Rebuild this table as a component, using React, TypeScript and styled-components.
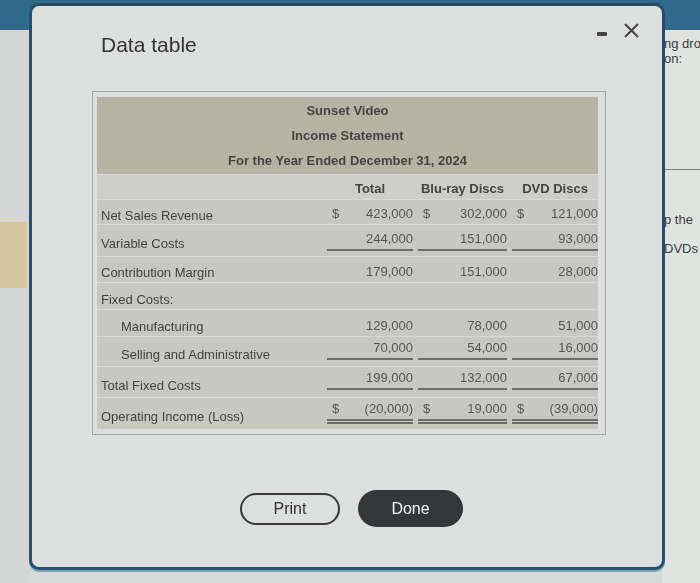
import React from "react";
import styled, { createGlobalStyle } from "styled-components";

const Global = createGlobalStyle`
  html, body { margin: 0; padding: 0; }
  body {
    width: 700px;
    height: 583px;
    overflow: hidden;
    background: #d6d9d8;
    font-family: "Liberation Sans", Arial, sans-serif;
  }
`;

const Page = styled.div`
  width: 700px;
  height: 583px;
  display: flex;
  flex-direction: column;
`;

const TopBand = styled.div`
  height: 30px;
  background: #2f6a8c;
  flex: none;
`;

const Main = styled.div`
  flex: 1;
  display: flex;
`;

const LeftGutter = styled.div`
  width: 29px;
  background: #d4d7d6;
  padding-top: 192px;
  box-sizing: border-box;
`;

const YellowBand = styled.div`
  width: 27px;
  height: 66px;
  background: #d5c89f;
`;

const Behind = styled.div`
  flex: 1;
`;

const RightPanel = styled.div`
  width: 38px;
  background: #e1e3e1;
  padding-top: 6px;
  box-sizing: border-box;
  color: #3a3a3a;
  font-size: 13px;
  line-height: 15px;
  overflow: hidden;
  white-space: nowrap;
`;

const SideText = styled.div<{ $top?: number }>`
  padding-left: 2px;
  margin-top: ${(p) => p.$top ?? 0}px;
`;

const SideRule = styled.div`
  height: 1px;
  background: #7a7c7b;
  margin-top: 103px;
`;

const Modal = styled.div`
  position: fixed;
  left: 29px;
  top: 3px;
  width: 636px;
  height: 567px;
  box-sizing: border-box;
  border: 3px solid #284e6e;
  border-radius: 10px;
  background: #dcdfdd;
  box-shadow: 0 2px 0 #6ea5c0;
  display: flex;
  flex-direction: column;
`;

const Header = styled.div`
  display: flex;
  justify-content: space-between;
  align-items: flex-start;
  padding: 26px 22px 0 69px;
  height: 58px;
  box-sizing: border-box;
`;

const Title = styled.h1`
  margin: 0;
  font-size: 21px;
  font-weight: normal;
  color: #333;
  line-height: 26px;
`;

const Controls = styled.div`
  display: flex;
  align-items: center;
  gap: 16px;
  margin-top: -10px;
`;

const Minimize = styled.div`
  width: 10px;
  height: 4px;
  background: #444;
  border-radius: 1px;
  margin-top: 6px;
`;

const TableBox = styled.div`
  margin: 27px 0 0 60px;
  width: 514px;
  box-sizing: border-box;
  border: 1px solid #a3a5a1;
  padding: 5px 7px 5px 4px;
`;

const Banner = styled.div`
  background: #b5b3a3;
  padding: 1px 0 1px;
  text-align: center;
  font-weight: bold;
  font-size: 13px;
  line-height: 25px;
  color: #454540;
`;

const cols = "225px 86px 89px 86px";

const Row = styled.div<{ $h: number; $light?: boolean }>`
  display: grid;
  grid-template-columns: ${cols};
  column-gap: 5px;
  height: ${(p) => p.$h}px;
  box-sizing: border-box;
  background: ${(p) => (p.$light ? "#cdcec6" : "#c7c8bf")};
  border-top: 1px solid #d9dad3;
`;

const HeadCell = styled.div`
  font-weight: bold;
  font-size: 13px;
  color: #454540;
  text-align: center;
  align-self: center;
  padding-top: 2px;
`;

const Label = styled.div<{ $indent?: boolean }>`
  display: flex;
  align-items: center;
  padding-top: 6px;
  padding-left: ${(p) => (p.$indent ? 24 : 4)}px;
  font-size: 13px;
  color: #424242;
`;

const Value = styled.div<{ $top: number; $rule?: "single" | "double" }>`
  align-self: start;
  margin-top: ${(p) => p.$top}px;
  display: flex;
  justify-content: space-between;
  padding: 0 0 0 5px;
  font-size: 13px;
  line-height: 16px;
  color: #555652;
  padding-bottom: ${(p) => (p.$rule ? 2 : 0)}px;
  border-bottom: ${(p) =>
    p.$rule === "double"
      ? "5px double #6c6d68"
      : p.$rule === "single"
      ? "2px solid #6c6d68"
      : "none"};
`;

const Footer = styled.div`
  display: flex;
  justify-content: center;
  align-items: center;
  gap: 18px;
  margin-top: 55px;
  padding-left: 9px;
`;

const PrintButton = styled.button`
  width: 100px;
  height: 32px;
  border: 2px solid #3a3a3a;
  border-radius: 16px;
  background: transparent;
  font-family: "Liberation Sans", Arial, sans-serif;
  font-size: 16px;
  color: #333;
`;

const DoneButton = styled.button`
  width: 105px;
  height: 37px;
  border: none;
  border-radius: 19px;
  background: #33383d;
  font-family: "Liberation Sans", Arial, sans-serif;
  font-size: 16px;
  color: #f4f4f4;
`;

type Rule = "single" | "double" | undefined;
type Line = {
  label: string;
  indent?: boolean;
  h: number;
  top?: number;
  rule?: Rule;
  vals?: [string, string][];
};

const lines: Line[] = [
  { label: "Net Sales Revenue", h: 25, top: 6, vals: [["$", "423,000"], ["$", "302,000"], ["$", "121,000"]] },
  { label: "Variable Costs", h: 32, top: 6, rule: "single", vals: [["", "244,000"], ["", "151,000"], ["", "93,000"]] },
  { label: "Contribution Margin", h: 26, top: 7, vals: [["", "179,000"], ["", "151,000"], ["", "28,000"]] },
  { label: "Fixed Costs:", h: 27 },
  { label: "Manufacturing", indent: true, h: 27, top: 8, vals: [["", "129,000"], ["", "78,000"], ["", "51,000"]] },
  { label: "Selling and Administrative", indent: true, h: 30, top: 3, rule: "single", vals: [["", "70,000"], ["", "54,000"], ["", "16,000"]] },
  { label: "Total Fixed Costs", h: 31, top: 3, rule: "single", vals: [["", "199,000"], ["", "132,000"], ["", "67,000"]] },
  { label: "Operating Income (Loss)", h: 32, top: 3, rule: "double", vals: [["$", "(20,000)"], ["$", "19,000"], ["$", "(39,000)"]] },
];

export default function App() {
  return (
    <>
      <Global />
      <Page>
        <TopBand />
        <Main>
          <LeftGutter>
            <YellowBand />
          </LeftGutter>
          <Behind />
          <RightPanel>
            <SideText>ng dro</SideText>
            <SideText>on:</SideText>
            <SideRule />
            <SideText $top={42}>p the</SideText>
            <SideText $top={14}>DVDs</SideText>
          </RightPanel>
        </Main>
      </Page>
      <Modal>
        <Header>
          <Title>Data table</Title>
          <Controls>
            <Minimize />
            <svg width="17" height="17" viewBox="0 0 17 17">
              <path d="M2 2 L15 15 M15 2 L2 15" stroke="#444" strokeWidth="2" fill="none" />
            </svg>
          </Controls>
        </Header>
        <TableBox>
          <Banner>
            <div>Sunset Video</div>
            <div>Income Statement</div>
            <div>For the Year Ended December 31, 2024</div>
          </Banner>
          <Row $h={25} $light>
            <div />
            <HeadCell>Total</HeadCell>
            <HeadCell>Blu-ray Discs</HeadCell>
            <HeadCell>DVD Discs</HeadCell>
          </Row>
          {lines.map((l) => (
            <Row key={l.label} $h={l.h}>
              <Label $indent={l.indent}>{l.label}</Label>
              {l.vals?.map(([sign, v], i) => (
                <Value key={i} $top={l.top ?? 0} $rule={l.rule}>
                  <span>{sign}</span>
                  <span>{v}</span>
                </Value>
              ))}
            </Row>
          ))}
        </TableBox>
        <Footer>
          <PrintButton>Print</PrintButton>
          <DoneButton>Done</DoneButton>
        </Footer>
      </Modal>
    </>
  );
}
